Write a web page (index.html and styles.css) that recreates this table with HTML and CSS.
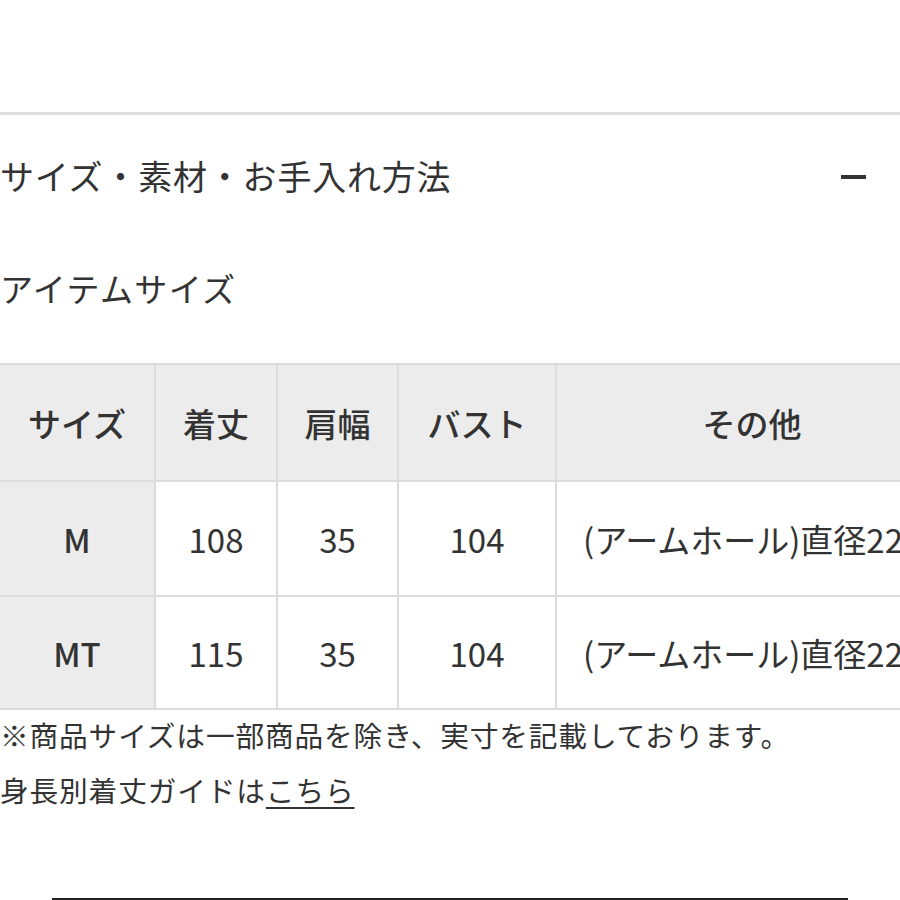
FILE: index.html
```html
<!DOCTYPE html>
<html lang="ja">
<head>
<meta charset="utf-8">
<title>サイズ・素材・お手入れ方法</title>
<link rel="stylesheet" href="styles.css">
</head>
<body>
<div class="page">
  <div class="top-space"></div>
  <section class="accordion">
    <div class="acc-head">
      <h2 class="acc-title">サイズ・素材・お手入れ方法</h2>
      <span class="minus" aria-hidden="true"></span>
    </div>
    <h3 class="item-title">アイテムサイズ</h3>
    <div class="table-wrap">
      <table class="size-table">
        <colgroup>
          <col class="c1"><col class="c2"><col class="c3"><col class="c4"><col class="c5">
        </colgroup>
        <thead>
          <tr class="head-row">
            <th>サイズ</th><th>着丈</th><th>肩幅</th><th>バスト</th><th>その他</th>
          </tr>
        </thead>
        <tbody>
          <tr class="row1">
            <th>M</th><td>108</td><td>35</td><td>104</td><td class="other">(アームホール)直径22cm</td>
          </tr>
          <tr class="row2">
            <th>MT</th><td>115</td><td>35</td><td>104</td><td class="other">(アームホール)直径22cm</td>
          </tr>
        </tbody>
      </table>
    </div>
    <p class="note">※商品サイズは一部商品を除き、実寸を記載しております。</p>
    <p class="note">身長別着丈ガイドは<a class="link" href="#">こちら</a></p>
    <div class="btn-area"><div class="btn"></div></div>
  </section>
</div>
</body>
</html>
```
FILE: styles.css
```css
html, body {
  margin: 0;
  padding: 0;
  background: #ffffff;
}
body {
  font-family: "Noto Sans CJK JP", "Noto Sans", sans-serif;
  color: #333333;
  overflow: hidden;
}
.page {
  width: 900px;
  height: 900px;
  overflow: hidden;
}
.top-space {
  height: 112px;
}
.accordion {
  border-top: 3px solid #dedede;
}
.acc-head {
  height: 120px;
  display: flex;
  align-items: center;
  justify-content: space-between;
  padding-right: 34px;
}
.acc-title {
  margin: 0;
  font-size: 34px;
  font-weight: 400;
  letter-spacing: 0.8px;
  color: #333;
}
.minus {
  width: 25px;
  height: 4px;
  background: #333;
  margin-top: 4px;
}
.item-title {
  margin: 29px 0 0;
  font-size: 33px;
  line-height: 48px;
  font-weight: 400;
  letter-spacing: 1.4px;
  color: #333;
}
.table-wrap {
  margin-top: 51px;
  width: 900px;
  overflow: hidden;
}
.size-table {
  border-collapse: collapse;
  table-layout: fixed;
  width: 948px;
  font-size: 33px;
}
.c1 { width: 155px; }
.c2 { width: 122px; }
.c3 { width: 121px; }
.c4 { width: 158px; }
.c5 { width: 392px; }
.size-table th,
.size-table td {
  border: 2px solid #dcdcdc;
  text-align: center;
  padding: 0;
  color: #333;
  white-space: nowrap;
}
.size-table tr > :first-child {
  border-left: none;
}
.head-row {
  height: 117px;
}
.head-row th {
  background: #ececec;
  font-weight: 500;
}
.row1 { height: 115px; }
.row2 { height: 113px; }
.size-table tbody th {
  background: #ececec;
  font-weight: 500;
}
.size-table tbody td {
  background: #ffffff;
  font-weight: 400;
}
.size-table td.other {
  text-align: left;
  padding-left: 26px;
  overflow: hidden;
}
.note {
  margin: 0;
  font-size: 28.7px;
  line-height: 55px;
  letter-spacing: 0.85px;
  color: #333;
}
.note:first-of-type {
  margin-top: -3px;
}
.link {
  color: #333;
  text-decoration: underline;
  text-underline-offset: 5px;
  text-decoration-thickness: 2px;
}
.btn-area {
  padding: 81px 52px 0;
}
.btn {
  height: 40px;
  border: 3px solid #222;
}
```
